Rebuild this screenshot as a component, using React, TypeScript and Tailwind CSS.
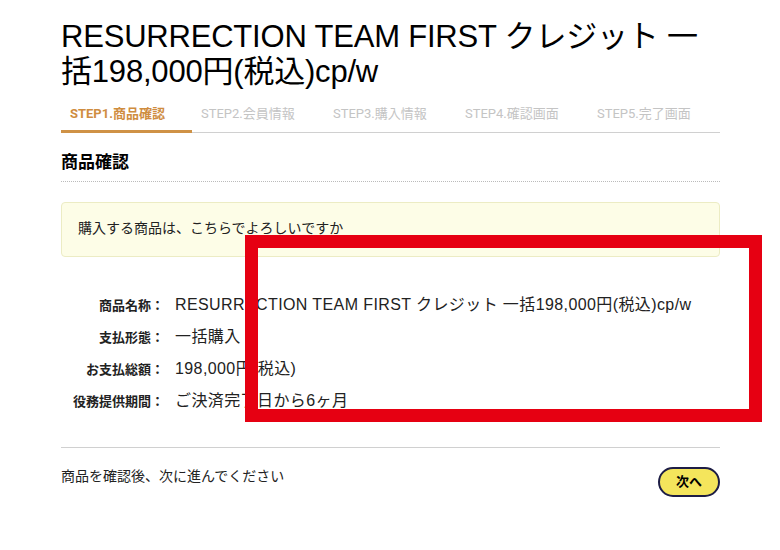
import React from "react"

const steps = ["STEP1.商品確認", "STEP2.会員情報", "STEP3.購入情報", "STEP4.確認画面", "STEP5.完了画面"]

const rows = [
  { label: "商品名称：", value: "RESURRECTION TEAM FIRST クレジット 一括198,000円(税込)cp/w" },
  { label: "支払形態：", value: "一括購入" },
  { label: "お支払総額：", value: "198,000円(税込)" },
  { label: "役務提供期間：", value: "ご決済完了日から6ヶ月" },
]

export default function App() {
  return (
    <div
      className="relative min-h-[550px] w-[780px] bg-white text-[#222]"
      style={{ fontFamily: '"Liberation Sans", "Noto Sans CJK JP", sans-serif' }}
    >
      <div className="mx-[61px] w-[659px] pt-[19px]">
        {/* Title */}
        <h1 className="text-[31px] leading-[35px] font-normal tracking-[-0.2px] text-black">
          RESURRECTION TEAM FIRST クレジット 一括198,000円(税込)cp/w
        </h1>

        {/* Steps */}
        <div className="mt-[11px] flex border-b border-[#d0d0d0]">
          {steps.map((s, i) => (
            <div
              key={s}
              className={
                i === 0
                  ? "-mb-px w-[131px] border-b-[3px] border-[#cf9246] pt-[4px] pb-[6px] pl-[9px] text-[13px] font-bold text-[#cf8d3f]"
                  : "w-[132px] pt-[4px] pb-[8px] pl-[9px] text-[13px] text-[#c4c4c4]"
              }
              style={{ fontFamily: 'Roboto, "Noto Sans CJK JP", sans-serif' }}
            >
              {s}
            </div>
          ))}
        </div>

        {/* Section heading */}
        <h2 className="mt-[17px] border-b border-dotted border-[#bbb] pb-[6px] text-[17px] font-bold text-black">
          商品確認
        </h2>

        {/* Notice */}
        <div className="mt-[20px] rounded-[4px] border border-[#ececc4] bg-[#fdfde7] px-[16px] pt-[16px] pb-[18px] text-[14px] leading-[19px]">
          購入する商品は、こちらでよろしいですか
        </div>

        {/* Details */}
        <div className="mt-[38px] flex flex-col gap-[12px]">
          {rows.map((r) => (
            <div key={r.label} className="flex items-baseline">
              <div className="w-[103px] text-right text-[13px] font-bold leading-[19px]">{r.label}</div>
              <div className="pl-[11px] text-[16px] leading-[19px] tracking-[0.4px]">{r.value}</div>
            </div>
          ))}
        </div>

        {/* Footer */}
        <div className="mt-[36px] flex items-start justify-between border-t border-[#d0d0d0] pt-[19px]">
          <div className="text-[14px] leading-[19px]">商品を確認後、次に進んでください</div>
          <button className="h-[30px] w-[62px] rounded-full border-2 border-[#1d1d45] bg-[#f4e55c] text-[13px] font-bold text-black">
            次へ
          </button>
        </div>
      </div>

      {/* Red annotation rectangle */}
      <div className="absolute left-[245px] top-[235px] h-[187px] w-[517px] border-[13px] border-[#e60012]" />
    </div>
  )
}
